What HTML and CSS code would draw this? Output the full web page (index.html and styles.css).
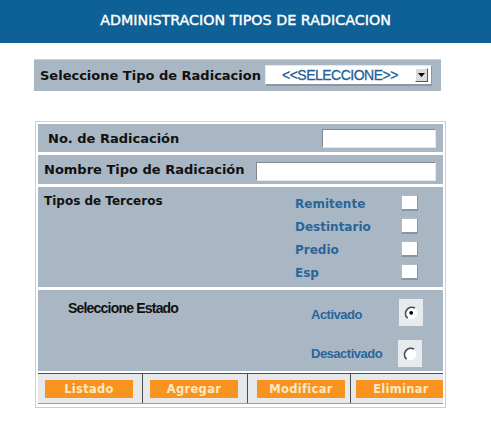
FILE: index.html
```html
<!DOCTYPE html>
<html lang="es">
<head>
<meta charset="utf-8">
<title>Administracion Tipos de Radicacion</title>
<link rel="stylesheet" href="styles.css">
</head>
<body>
<header class="header"><h1 class="title">ADMINISTRACION TIPOS DE RADICACION</h1></header>

<div class="topbar">
  <span class="toplabel">Seleccione Tipo de Radicacion</span>
  <div class="select">
    <span class="select-text">&lt;&lt;SELECCIONE&gt;&gt;</span>
    <span class="select-btn"><svg width="7" height="4" viewBox="0 0 7 4"><path d="M0 0H7L3.5 4Z" fill="#000"/></svg></span>
  </div>
</div>

<div class="panel">
  <div class="row row1">
    <span class="label">No. de Radicación</span>
    <span class="input input-short"></span>
  </div>
  <div class="row row2">
    <span class="label">Nombre Tipo de Radicación</span>
    <span class="input input-long"></span>
  </div>
  <div class="row row3">
    <span class="label label-small">Tipos de Terceros</span>
    <div class="checks">
      <div class="check-item"><span class="blue">Remitente</span><span class="checkbox"></span></div>
      <div class="check-item"><span class="blue">Destintario</span><span class="checkbox"></span></div>
      <div class="check-item"><span class="blue">Predio</span><span class="checkbox"></span></div>
      <div class="check-item"><span class="blue">Esp</span><span class="checkbox"></span></div>
    </div>
  </div>
  <div class="row row4">
    <span class="estado">Seleccione Estado</span>
    <div class="radios">
      <div class="radio-item r1"><span class="blue2">Activado</span>
        <span class="radio-box"><svg width="16" height="16" viewBox="0 0 16 16"><circle cx="8" cy="8" r="6.3" fill="#fff"/><path d="M4.6 13.2A6.3 6.3 0 0 1 12 3.1" fill="none" stroke="#4a4a4a" stroke-width="1.7"/><circle cx="8.2" cy="7.8" r="1.9" fill="#000"/></svg></span>
      </div>
      <div class="radio-item r2"><span class="blue2">Desactivado</span>
        <span class="radio-box"><svg width="16" height="16" viewBox="0 0 16 16"><circle cx="8" cy="8" r="6.3" fill="#fff"/><path d="M4.6 13.2A6.3 6.3 0 0 1 12 3.1" fill="none" stroke="#4a4a4a" stroke-width="1.7"/></svg></span>
      </div>
    </div>
  </div>
  <div class="row buttons">
    <div class="cell c1"><span class="btn">Listado</span></div>
    <div class="cell c2"><span class="btn">Agregar</span></div>
    <div class="cell c3"><span class="btn">Modificar</span></div>
    <div class="cell c4"><span class="btn">Eliminar</span></div>
  </div>
</div>
</body>
</html>
```

FILE: styles.css
```css
* { box-sizing: border-box; }
body {
  margin: 0;
  background: #fff;
  font-family: "DejaVu Sans", Verdana, sans-serif;
  width: 491px;
  height: 431px;
  overflow: hidden;
}
.header {
  height: 43px;
  background: #0d6196;
  display: flex;
  justify-content: center;
  padding-top: 12px;
}
.title {
  margin: 0;
  color: #fff;
  font-size: 14.3px;
  font-weight: normal;
  -webkit-text-stroke: 0.4px #fff;
  line-height: 16px;
}
.topbar {
  margin: 16px 0 0 34px;
  width: 407px;
  height: 32px;
  background: #a9b7c4;
  border-top: 1px solid #c9d2da;
  display: flex;
  align-items: center;
  padding-left: 6px;
}
.toplabel {
  font-weight: bold;
  font-size: 13px;
  color: #111;
}
.select {
  margin-left: 4px;
  width: 167px;
  height: 21px;
  background: #fff;
  border-top: 1px solid #e8e8e8;
  border-left: 1px solid #e8e8e8;
  border-bottom: 2px solid #8d97a0;
  border-right: 1px solid #8d97a0;
  display: flex;
  align-items: center;
  position: relative;
}
.select-text {
  font-family: "Liberation Sans", Arial, sans-serif;
  font-size: 14px;
  letter-spacing: -0.5px;
  color: #24609a;
  margin-left: 16px;
  -webkit-text-stroke: 0.3px #24609a;
}
.select-btn {
  position: absolute;
  right: 3px;
  top: 2px;
  width: 13px;
  height: 14px;
  background: #dcdcdc;
  border-top: 1px solid #fff;
  border-left: 1px solid #fff;
  border-right: 1px solid #555;
  border-bottom: 1px solid #555;
  display: flex;
  align-items: center;
  justify-content: center;
}
.panel {
  margin: 30px 0 0 35px;
  width: 411px;
  height: 287px;
  border: 1px solid #cfcfcf;
  padding: 2px;
  display: flex;
  flex-direction: column;
  gap: 3px;
}
.row {
  background: #a9b7c4;
  display: flex;
}
.label {
  font-weight: bold;
  font-size: 13px;
  color: #111;
}
.label-small { font-size: 12px; }
.input {
  display: block;
  height: 19px;
  background: #fff;
  border-top: 1px solid #7e8a94;
  border-left: 1px solid #7e8a94;
  border-bottom: 1px solid #e4e8eb;
  border-right: 1px solid #e4e8eb;
  margin-left: auto;
  margin-right: 7px;
}
.row1 { height: 28px; align-items: center; padding-left: 10px; }
.input-short { width: 114px; }
.row2 { height: 29px; align-items: center; padding-left: 6px; }
.row2 .input { margin-top: 4px; }
.input-long { width: 180px; }
.row3 {
  height: 100px;
  padding: 6px 0 0 6px;
  align-items: flex-start;
}
.row3 .label-small { margin-top: 1px; }
.checks {
  margin-left: auto;
  width: 148px;
  display: flex;
  flex-direction: column;
}
.check-item {
  height: 23px;
  display: flex;
  align-items: flex-start;
  padding-top: 2px;
}
.check-item:nth-child(4) { height: 21px; }
.blue {
  font-weight: bold;
  font-size: 12px;
  color: #2a659a;
  width: 106px;
  padding-top: 2px;
}
.checkbox {
  width: 17px;
  height: 16px;
  background: #fff;
  border-top: 1px solid #b4bcc3;
  border-left: 1px solid #b4bcc3;
  border-right: 1px solid #8b959e;
  border-bottom: 2px solid #8b959e;
}
.row4 {
  height: 81px;
  padding-left: 30px;
}
.estado {
  font-family: "Liberation Sans", Arial, sans-serif;
  font-weight: bold;
  font-size: 14px;
  letter-spacing: -0.8px;
  color: #111;
  margin-top: 10px;
}
.radios {
  margin-left: auto;
  width: 132px;
  display: flex;
  flex-direction: column;
  padding-top: 9px;
  gap: 14px;
}
.radio-item {
  display: flex;
  align-items: center;
}
.blue2 {
  font-family: "Liberation Sans", Arial, sans-serif;
  font-weight: bold;
  font-size: 13px;
  letter-spacing: -0.5px;
  color: #2a659a;
  width: 88px;
}
.r1 .blue2 { padding-top: 4px; }
.r2 .blue2 { width: 87px; }
.radio-box {
  width: 24px;
  height: 27px;
  background: #e7ebee;
  display: flex;
  align-items: center;
  justify-content: center;
}
.buttons {
  height: 31px;
  margin-top: -1px;
  background: #e5e9ec;
  border-top: 1px solid #4d4d4d;
  border-bottom: 1px solid #9aa0a5;
  display: grid;
  grid-template-columns: 105px 105px 103px 1fr;
}
.cell {
  border-right: 1px solid #4d4d4d;
  padding-top: 6px;
}
.cell.c4 { border-right: none; overflow: hidden; }
.c1 { padding-left: 7px; }
.c2 { padding-left: 7px; }
.c3 { padding-left: 9px; }
.c4 { padding-left: 5px; }
.btn {
  display: flex;
  align-items: center;
  justify-content: center;
  width: 88px;
  height: 18px;
  background: #f7931e;
  color: #fde9c6;
  font-weight: bold;
  font-size: 11.5px;
  letter-spacing: 0.3px;
}
.c4 .btn { width: 90px; }
```
